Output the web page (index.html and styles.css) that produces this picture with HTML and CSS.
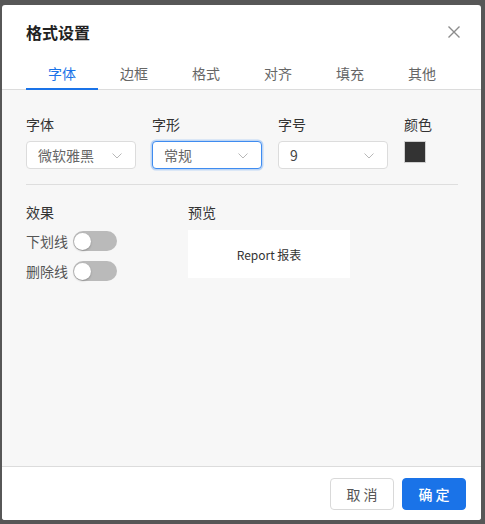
FILE: index.html
```html
<!DOCTYPE html>
<html lang="zh-CN">
<head>
<meta charset="utf-8">
<title>格式设置</title>
<link rel="stylesheet" href="styles.css">
</head>
<body>
<div class="dialog">
  <div class="header">
    <div class="title">格式设置</div>
    <button class="close" aria-label="关闭">
      <svg width="12" height="12" viewBox="0 0 12 12"><path d="M0.5 0.5 L11.5 11.5 M11.5 0.5 L0.5 11.5" stroke="#8c8c8c" stroke-width="1.4" fill="none"/></svg>
    </button>
  </div>
  <div class="tabbar">
    <div class="tabs">
      <div class="tab active">字体</div>
      <div class="tab">边框</div>
      <div class="tab">格式</div>
      <div class="tab">对齐</div>
      <div class="tab">填充</div>
      <div class="tab">其他</div>
    </div>
  </div>
  <div class="body">
    <div class="fields">
      <div class="field">
        <div class="label">字体</div>
        <div class="select"><span class="value">微软雅黑</span><svg class="chev" width="10" height="6" viewBox="0 0 10 6"><path d="M0.5 0.5 L5 5 L9.5 0.5" stroke="#b8b8b8" stroke-width="1" fill="none"/></svg></div>
      </div>
      <div class="field">
        <div class="label">字形</div>
        <div class="select focus"><span class="value">常规</span><svg class="chev" width="10" height="6" viewBox="0 0 10 6"><path d="M0.5 0.5 L5 5 L9.5 0.5" stroke="#b8b8b8" stroke-width="1" fill="none"/></svg></div>
      </div>
      <div class="field">
        <div class="label">字号</div>
        <div class="select"><span class="value dark">9</span><svg class="chev" width="10" height="6" viewBox="0 0 10 6"><path d="M0.5 0.5 L5 5 L9.5 0.5" stroke="#b8b8b8" stroke-width="1" fill="none"/></svg></div>
      </div>
      <div class="field">
        <div class="label">颜色</div>
        <div class="swatch"></div>
      </div>
    </div>
    <div class="divider"></div>
    <div class="lower">
      <div class="effects">
        <div class="label">效果</div>
        <div class="toggle-row first"><span class="tlabel">下划线</span><span class="switch"><span class="knob"></span></span></div>
        <div class="toggle-row"><span class="tlabel">删除线</span><span class="switch"><span class="knob"></span></span></div>
      </div>
      <div class="preview-col">
        <div class="label">预览</div>
        <div class="preview">Report 报表</div>
      </div>
    </div>
  </div>
  <div class="footer">
    <button class="btn cancel">取 消</button>
    <button class="btn ok">确 定</button>
  </div>
</div>
</body>
</html>
```
FILE: styles.css
```css
* { box-sizing: border-box; }
html, body { margin: 0; padding: 0; }
body {
  background: #575757;
  width: 485px;
  height: 524px;
  overflow: hidden;
  font-family: "Noto Sans CJK SC", "Noto Sans", sans-serif;
  font-size: 14px;
  color: #333;
}
.dialog {
  margin: 5px 0 0 2px;
  width: 479px;
  height: 515px;
  background: #fff;
  border-radius: 3px;
  display: flex;
  flex-direction: column;
  overflow: hidden;
}
.header {
  display: flex;
  justify-content: space-between;
  align-items: center;
  padding: 16px 21px 0 24px;
}
.title {
  font-size: 16px;
  line-height: 22px;
  font-weight: 700;
  color: #222;
}
.close {
  border: 0;
  background: none;
  padding: 0;
  width: 12px;
  height: 12px;
  display: flex;
}
.tabbar {
  margin-top: 18px;
  border-bottom: 1px solid #dcdcdc;
  padding: 0 23px 0 24px;
}
.tabs {
  display: grid;
  grid-template-columns: repeat(6, 72px);
}
.tab {
  text-align: center;
  line-height: 20px;
  padding-top: 2px;
  padding-bottom: 5px;
  border-bottom: 2px solid transparent;
  margin-bottom: -1px;
  color: #666;
  font-size: 14px;
}
.tab.active {
  color: #1a73e8;
  border-bottom-color: #1a73e8;
}
.body {
  flex: 1;
  background: #f7f7f7;
  padding: 24px 23px 0 24px;
}
.fields {
  display: grid;
  grid-template-columns: repeat(4, 110px);
  column-gap: 16px;
}
.label {
  line-height: 20px;
  color: #333;
  font-size: 14px;
}
.select {
  margin-top: 7px;
  height: 28px;
  background: #fff;
  border: 1px solid #dcdcdc;
  border-radius: 4px;
  display: flex;
  align-items: center;
  justify-content: space-between;
  padding: 0 13px 0 11px;
}
.select.focus {
  border-color: #3f8cf0;
  box-shadow: 0 0 0 1.5px rgba(63, 140, 240, 0.3);
}
.value { color: #666; line-height: 20px; }
.value.dark { color: #444; }
.chev { display: block; margin-top: 1px; }
.swatch {
  margin-top: 7px;
  width: 22px;
  height: 22px;
  background: #333;
  border: 1px solid #cfcfcf;
}
.divider {
  margin-top: 15px;
  height: 1px;
  background: #dedede;
}
.lower {
  margin-top: 17px;
  display: grid;
  grid-template-columns: 162px 162px;
}
.toggle-row {
  display: flex;
  align-items: center;
  gap: 5px;
  height: 20px;
  margin-top: 10px;
}
.toggle-row.first { margin-top: 9px; }
.tlabel { color: #555; line-height: 20px; }
.switch {
  position: relative;
  width: 44px;
  height: 20px;
  border-radius: 10px;
  background: #bababa;
}
.knob {
  position: absolute;
  left: 1px;
  top: 1.5px;
  width: 17px;
  height: 17px;
  border-radius: 50%;
  background: #fff;
  box-shadow: 0 1px 2px rgba(0,0,0,0.25);
}
.preview {
  margin-top: 8px;
  height: 48px;
  background: #fff;
  display: flex;
  align-items: center;
  justify-content: center;
  font-size: 12px;
  color: #333;
}
.footer {
  height: 54px;
  border-top: 1px solid #dcdcdc;
  background: #fff;
  display: flex;
  justify-content: flex-end;
  align-items: flex-start;
  gap: 8px;
  padding: 11px 15px 0 0;
}
.btn {
  width: 64px;
  height: 32px;
  border-radius: 4px;
  font-family: "Noto Sans CJK SC", "Noto Sans", sans-serif;
  font-size: 14px;
  padding: 0;
}
.cancel {
  background: #fff;
  border: 1px solid #d9d9d9;
  color: #555;
}
.ok {
  background: #1a73e8;
  border: 1px solid #1a73e8;
  color: #fff;
  font-weight: 500;
}
```
